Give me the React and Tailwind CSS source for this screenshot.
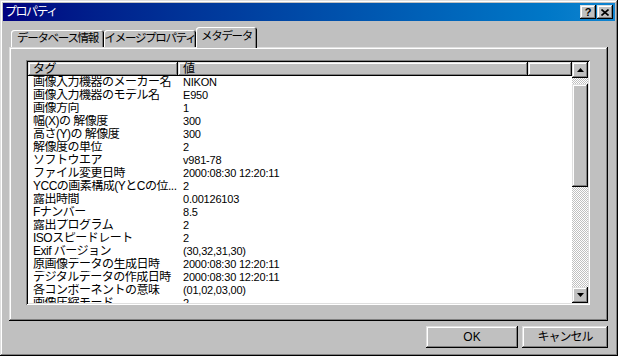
import React from 'react'

const rows = [
  ['画像入力機器のメーカー名', 'NIKON'],
  ['画像入力機器のモデル名', 'E950'],
  ['画像方向', '1'],
  ['幅(X)の 解像度', '300'],
  ['高さ(Y)の 解像度', '300'],
  ['解像度の単位', '2'],
  ['ソフトウエア', 'v981-78'],
  ['ファイル変更日時', '2000:08:30 12:20:11'],
  ['YCCの画素構成(YとCの位...', '2'],
  ['露出時間', '0.00126103'],
  ['Fナンバー', '8.5'],
  ['露出プログラム', '2'],
  ['ISOスピードレート', '2'],
  ['Exif バージョン', '(30,32,31,30)'],
  ['原画像データの生成日時', '2000:08:30 12:20:11'],
  ['デジタルデータの作成日時', '2000:08:30 12:20:11'],
  ['各コンポーネントの意味', '(01,02,03,00)'],
  ['画像圧縮モード', '2'],
]

// win98 style bevels
const raised = 'shadow-[inset_-1px_-1px_#000,inset_1px_1px_#dfdfdf,inset_-2px_-2px_#808080,inset_2px_2px_#fff]'
const sunken = 'shadow-[inset_1px_1px_#808080,inset_-1px_-1px_#fff,inset_2px_2px_#000,inset_-2px_-2px_#dfdfdf]'
const checker = 'bg-[repeating-conic-gradient(#fff_0%_25%,#c0c0c0_0%_50%)] bg-[length:2px_2px]'

const Arrow = ({ down }) => (
  <svg width="7" height="4" viewBox="0 0 7 4" className={down ? 'rotate-180' : ''}>
    <path d="M3.5 0 L7 4 L0 4 Z" fill="#000" />
  </svg>
)

const Tab = ({ label, active, w }) => (
  <div
    className={`${w} flex items-center justify-center bg-[#c0c0c0] rounded-t-[3px] text-[11.5px] leading-none tracking-[-1.3px] whitespace-nowrap ${
      active
        ? 'relative z-10 top-[1px] h-[21px] pb-[2px] shadow-[inset_1px_1px_#fff,inset_-1px_0_#000,inset_-2px_0_#808080]'
        : 'h-[17px] pt-[1px] shadow-[inset_1px_1px_#fff,inset_-1px_0_#000,inset_-2px_0_#808080]'
    }`}
  >
    {label}
  </div>
)

export default function App() {
  return (
    <div className={`w-[618px] h-[356px] bg-[#c0c0c0] p-[3px] text-black font-['Liberation_Sans','Noto_Sans_CJK_JP',sans-serif] ${raised}`}>
      {/* title bar */}
      <div className="h-[18px] flex items-center justify-between bg-gradient-to-r from-[#000080] to-[#1084d0] pl-[2px] pr-[2px]">
        <span className="text-white text-[12px] tracking-[-1.5px] leading-none">プロパティ</span>
        <div className="flex gap-[1px]">
          <div className={`w-[16px] h-[14px] bg-[#c0c0c0] flex items-center justify-center text-[11px] font-bold leading-none ${raised}`}>?</div>
          <div className={`w-[16px] h-[14px] bg-[#c0c0c0] flex items-center justify-center ${raised}`}>
            <svg width="8" height="7" viewBox="0 0 8 7">
              <path d="M0.5 0.5 L7.5 6.5 M7.5 0.5 L0.5 6.5" stroke="#000" strokeWidth="1.6" />
            </svg>
          </div>
        </div>
      </div>

      <div className="pl-[6px] pr-[7px] mt-[6px]">
        {/* tabs */}
        <div className="h-[20px] flex items-end pl-[2px]">
          <Tab label="データベース情報" w="w-[93px]" />
          <Tab label="イメージプロパティ" w="w-[92px]" />
          <Tab label="メタデータ" w="w-[61px]" active />
        </div>

        {/* panel */}
        <div className={`h-[274px] bg-[#c0c0c0] pt-[13px] pl-[17px] ${raised}`}>
          <div className={`w-[564px] h-[245px] bg-white p-[2px] flex ${sunken}`}>
            <div className="flex-1 overflow-hidden">
              <div className="h-[14px] flex bg-[#c0c0c0] text-[12px] leading-[14px]">
                <div className={`w-[150px] pl-[5px] tracking-[-0.5px] ${raised}`}>タグ</div>
                <div className={`w-[350px] pl-[5px] ${raised}`}>値</div>
                <div className={`flex-1 ${raised}`}></div>
              </div>
              {rows.map(([tag, value]) => (
                <div key={tag} className="h-[13px] flex leading-[13px] whitespace-nowrap">
                  <div className="w-[150px] pl-[5px] text-[12px] tracking-[-0.5px] overflow-hidden">{tag}</div>
                  <div className="pl-[5px] text-[11px] tracking-[-0.2px]">{value}</div>
                </div>
              ))}
            </div>

            {/* scrollbar */}
            <div className="w-[16px] flex flex-col">
              <div className={`h-[16px] bg-[#c0c0c0] flex items-center justify-center ${raised}`}>
                <Arrow />
              </div>
              <div className={`flex-1 flex flex-col ${checker}`}>
                <div className="h-[6px]"></div>
                <div className={`h-[103px] bg-[#c0c0c0] ${raised}`}></div>
              </div>
              <div className={`h-[16px] bg-[#c0c0c0] flex items-center justify-center ${raised}`}>
                <Arrow down />
              </div>
            </div>
          </div>
        </div>

        {/* buttons */}
        <div className="mt-[5px] flex justify-end gap-[4px] text-[12px]">
          <div className={`w-[92px] h-[22px] flex items-center justify-center ${raised}`}>OK</div>
          <div className={`w-[86px] h-[22px] flex items-center justify-center tracking-[-1px] ${raised}`}>キャンセル</div>
        </div>
      </div>
    </div>
  )
}
